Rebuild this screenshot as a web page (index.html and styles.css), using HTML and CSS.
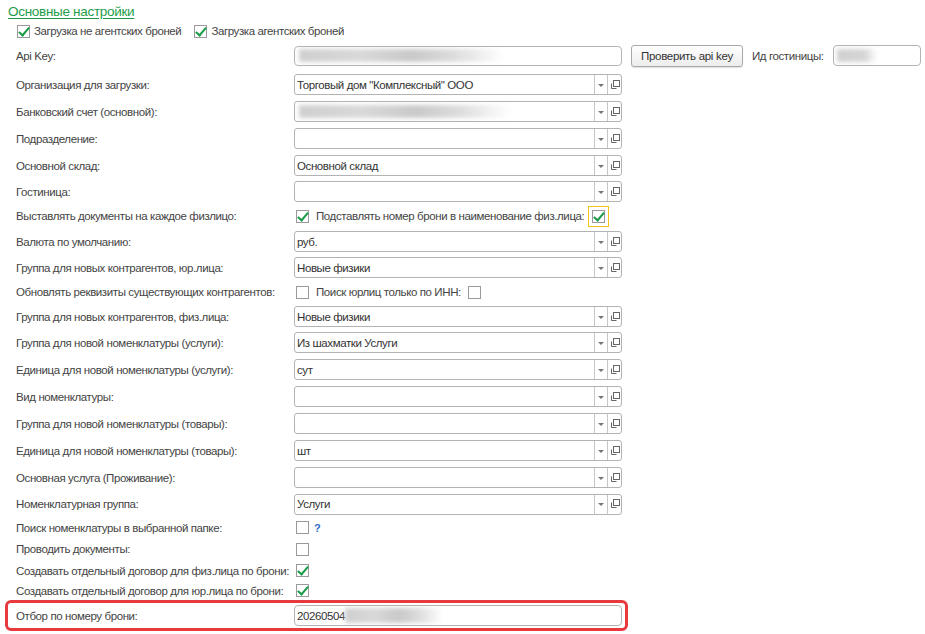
FILE: index.html
```html
<!DOCTYPE html>
<html lang="ru">
<head>
<meta charset="utf-8">
<title>Основные настройки</title>
<link rel="stylesheet" href="styles.css">
</head>
<body>
<div class="form">
  <div class="title-row"><a class="title" href="#">Основные настройки</a></div>

  <div class="row h18 top-checks">
    <span class="cb on"></span><span class="cb-text">Загрузка не агентских броней</span>
    <span class="cb on second"></span><span class="cb-text">Загрузка агентских броней</span>
  </div>

  <div class="row h31">
    <span class="lbl">Api Key:</span>
    <div class="input api"><span class="blur b-api"></span></div>
    <button class="btn">Проверить api key</button>
    <span class="lbl-inline">Ид гостиницы:</span>
    <div class="input hotel"><span class="blur b-hotel"></span></div>
  </div>

  <div class="row h27">
    <span class="lbl">Организация для загрузки:</span>
    <div class="field"><span class="val">Торговый дом "Комплексный" ООО</span><span class="dd"></span><span class="op"><svg width="10" height="10" viewBox="0 0 10 10"><rect x="3.5" y="0.5" width="6" height="6" fill="none" stroke="#666"/><path d="M1.5 3.5 V8.5 H6.5" fill="none" stroke="#666"/></svg></span></div>
  </div>

  <div class="row h27">
    <span class="lbl">Банковский счет (основной):</span>
    <div class="field"><span class="val"><span class="blur b-bank"></span></span><span class="dd"></span><span class="op"><svg width="10" height="10" viewBox="0 0 10 10"><rect x="3.5" y="0.5" width="6" height="6" fill="none" stroke="#666"/><path d="M1.5 3.5 V8.5 H6.5" fill="none" stroke="#666"/></svg></span></div>
  </div>

  <div class="row h27">
    <span class="lbl">Подразделение:</span>
    <div class="field"><span class="val"></span><span class="dd"></span><span class="op"><svg width="10" height="10" viewBox="0 0 10 10"><rect x="3.5" y="0.5" width="6" height="6" fill="none" stroke="#666"/><path d="M1.5 3.5 V8.5 H6.5" fill="none" stroke="#666"/></svg></span></div>
  </div>

  <div class="row h27">
    <span class="lbl">Основной склад:</span>
    <div class="field"><span class="val">Основной склад</span><span class="dd"></span><span class="op"><svg width="10" height="10" viewBox="0 0 10 10"><rect x="3.5" y="0.5" width="6" height="6" fill="none" stroke="#666"/><path d="M1.5 3.5 V8.5 H6.5" fill="none" stroke="#666"/></svg></span></div>
  </div>

  <div class="row h25">
    <span class="lbl">Гостиница:</span>
    <div class="field"><span class="val"></span><span class="dd"></span><span class="op"><svg width="10" height="10" viewBox="0 0 10 10"><rect x="3.5" y="0.5" width="6" height="6" fill="none" stroke="#666"/><path d="M1.5 3.5 V8.5 H6.5" fill="none" stroke="#666"/></svg></span></div>
  </div>

  <div class="row h24">
    <span class="lbl">Выставлять документы на каждое физлицо:</span>
    <span class="cb on fcb"></span><span class="cb-text">Подставлять номер брони в наименование физ.лица:</span>
    <span class="focus"><span class="cb on"></span></span>
  </div>

  <div class="row h27">
    <span class="lbl">Валюта по умолчанию:</span>
    <div class="field"><span class="val">руб.</span><span class="dd"></span><span class="op"><svg width="10" height="10" viewBox="0 0 10 10"><rect x="3.5" y="0.5" width="6" height="6" fill="none" stroke="#666"/><path d="M1.5 3.5 V8.5 H6.5" fill="none" stroke="#666"/></svg></span></div>
  </div>

  <div class="row h25">
    <span class="lbl">Группа для новых контрагентов, юр.лица:</span>
    <div class="field"><span class="val">Новые физики</span><span class="dd"></span><span class="op"><svg width="10" height="10" viewBox="0 0 10 10"><rect x="3.5" y="0.5" width="6" height="6" fill="none" stroke="#666"/><path d="M1.5 3.5 V8.5 H6.5" fill="none" stroke="#666"/></svg></span></div>
  </div>

  <div class="row h24">
    <span class="lbl">Обновлять реквизиты существующих контрагентов:</span>
    <span class="cb fcb"></span><span class="cb-text">Поиск юрлиц только по ИНН:</span>
    <span class="cb after"></span>
  </div>

  <div class="row h25">
    <span class="lbl">Группа для новых контрагентов, физ.лица:</span>
    <div class="field"><span class="val">Новые физики</span><span class="dd"></span><span class="op"><svg width="10" height="10" viewBox="0 0 10 10"><rect x="3.5" y="0.5" width="6" height="6" fill="none" stroke="#666"/><path d="M1.5 3.5 V8.5 H6.5" fill="none" stroke="#666"/></svg></span></div>
  </div>

  <div class="row h27">
    <span class="lbl">Группа для новой номенклатуры (услуги):</span>
    <div class="field"><span class="val">Из шахматки Услуги</span><span class="dd"></span><span class="op"><svg width="10" height="10" viewBox="0 0 10 10"><rect x="3.5" y="0.5" width="6" height="6" fill="none" stroke="#666"/><path d="M1.5 3.5 V8.5 H6.5" fill="none" stroke="#666"/></svg></span></div>
  </div>

  <div class="row h27">
    <span class="lbl">Единица для новой номенклатуры (услуги):</span>
    <div class="field"><span class="val">сут</span><span class="dd"></span><span class="op"><svg width="10" height="10" viewBox="0 0 10 10"><rect x="3.5" y="0.5" width="6" height="6" fill="none" stroke="#666"/><path d="M1.5 3.5 V8.5 H6.5" fill="none" stroke="#666"/></svg></span></div>
  </div>

  <div class="row h27">
    <span class="lbl">Вид номенклатуры:</span>
    <div class="field"><span class="val"></span><span class="dd"></span><span class="op"><svg width="10" height="10" viewBox="0 0 10 10"><rect x="3.5" y="0.5" width="6" height="6" fill="none" stroke="#666"/><path d="M1.5 3.5 V8.5 H6.5" fill="none" stroke="#666"/></svg></span></div>
  </div>

  <div class="row h27">
    <span class="lbl">Группа для новой номенклатуры (товары):</span>
    <div class="field"><span class="val"></span><span class="dd"></span><span class="op"><svg width="10" height="10" viewBox="0 0 10 10"><rect x="3.5" y="0.5" width="6" height="6" fill="none" stroke="#666"/><path d="M1.5 3.5 V8.5 H6.5" fill="none" stroke="#666"/></svg></span></div>
  </div>

  <div class="row h27">
    <span class="lbl">Единица для новой номенклатуры (товары):</span>
    <div class="field"><span class="val">шт</span><span class="dd"></span><span class="op"><svg width="10" height="10" viewBox="0 0 10 10"><rect x="3.5" y="0.5" width="6" height="6" fill="none" stroke="#666"/><path d="M1.5 3.5 V8.5 H6.5" fill="none" stroke="#666"/></svg></span></div>
  </div>

  <div class="row h27">
    <span class="lbl">Основная услуга (Проживание):</span>
    <div class="field"><span class="val"></span><span class="dd"></span><span class="op"><svg width="10" height="10" viewBox="0 0 10 10"><rect x="3.5" y="0.5" width="6" height="6" fill="none" stroke="#666"/><path d="M1.5 3.5 V8.5 H6.5" fill="none" stroke="#666"/></svg></span></div>
  </div>

  <div class="row h26">
    <span class="lbl">Номенклатурная группа:</span>
    <div class="field"><span class="val">Услуги</span><span class="dd"></span><span class="op"><svg width="10" height="10" viewBox="0 0 10 10"><rect x="3.5" y="0.5" width="6" height="6" fill="none" stroke="#666"/><path d="M1.5 3.5 V8.5 H6.5" fill="none" stroke="#666"/></svg></span></div>
  </div>

  <div class="row h21">
    <span class="lbl">Поиск номенклатуры в выбранной папке:</span>
    <span class="cb fcb"></span><span class="help">?</span>
  </div>

  <div class="row h22">
    <span class="lbl">Проводить документы:</span>
    <span class="cb fcb"></span>
  </div>

  <div class="row h21">
    <span class="lbl">Создавать отдельный договор для физ.лица по брони:</span>
    <span class="cb on fcb"></span>
  </div>

  <div class="row h19">
    <span class="lbl">Создавать отдельный договор для юр.лица по брони:</span>
    <span class="cb on fcb"></span>
  </div>

  <div class="row highlight">
    <span class="lbl">Отбор по номеру брони:</span>
    <div class="input booking"><span class="num">20260504</span><span class="blur b-book"></span></div>
  </div>
</div>
</body>
</html>
```

FILE: styles.css
```css
* { box-sizing: border-box; }
html, body { margin: 0; padding: 0; background: #fff; }
body {
  font-family: "Liberation Sans", Arial, sans-serif;
  font-size: 11.5px;
  letter-spacing: -0.4px;
  color: #444;
  width: 925px;
  height: 634px;
  overflow: hidden;
}
.form { display: flex; flex-direction: column; }
.title-row { height: 22px; padding-left: 8px; display: flex; align-items: center; padding-top: 1px; }
.title {
  font-size: 13.5px;
  letter-spacing: -0.3px;
  color: #1e9e4a;
  text-decoration: underline;
  text-underline-offset: 2px;
}
.row { display: flex; align-items: center; padding-left: 16px; }
.h18 { height: 18px; }
.h19 { height: 19px; }
.h21 { height: 21px; }
.h22 { height: 22px; }
.h24 { height: 24px; }
.h25 { height: 25px; }
.h26 { height: 26px; }
.h27 { height: 27px; }
.h31 { height: 31px; }

.lbl { width: 278px; flex: none; white-space: nowrap; }

.cb {
  width: 13px; height: 13px; flex: none;
  border: 1px solid #9a9a9a;
  background: #fff;
  position: relative;
}
.cb.on::after {
  content: "";
  position: absolute;
  left: 3px; top: -1px;
  width: 4px; height: 9px;
  border-right: 2px solid #1a9c48;
  border-bottom: 2px solid #1a9c48;
  transform: rotate(40deg);
}
.top-checks { padding-left: 17px; }
.top-checks .cb-text { margin-left: 4px; }
.top-checks .second { margin-left: 13px; }
.cb-text { margin-left: 7px; white-space: nowrap; }
.fcb { margin-left: 2px; }
.after { margin-left: 7px; }
.focus {
  width: 21px; height: 21px; flex: none;
  margin-left: 4px;
  border: 1px solid #f0c419;
  display: flex; align-items: center; justify-content: center;
}
.help { margin-left: 5px; color: #2c6fc4; font-weight: bold; font-size: 11px; }

.field {
  width: 328px; height: 21px; flex: none;
  border: 1px solid #b3b3b3;
  border-radius: 3px;
  display: flex;
  background: #fff;
  color: #333;
}
.val { flex: 1; padding-left: 2px; display: flex; align-items: center; white-space: nowrap; overflow: hidden; position: relative; }
.dd {
  width: 13px; flex: none;
  border-left: 1px solid #c6c6c6;
  display: flex; align-items: center; justify-content: center;
}
.dd::after {
  content: "";
  border-left: 3px solid transparent;
  border-right: 3px solid transparent;
  border-top: 3px solid #777;
  margin-top: 1px;
}
.op {
  width: 14px; flex: none;
  border-left: 1px solid #c6c6c6;
  display: flex; align-items: center; justify-content: center;
}

.input {
  height: 21px; flex: none;
  border: 1px solid #b3b3b3;
  border-radius: 4px;
  display: flex; align-items: center;
  background: #fff;
  color: #333;
  position: relative;
  overflow: hidden;
}
.api { width: 328px; height: 20px; }
.hotel { width: 88px; margin-left: 9px; }
.booking { width: 328px; padding-left: 2px; }

.blur {
  display: block;
  height: 13px;
  background: linear-gradient(90deg, #cfcfcf 0%, #d9d9d9 30%, #c9c9c9 55%, #dcdcdc 75%, rgba(235,235,235,0) 100%);
  filter: blur(2px);
}
.b-api { width: 205px; margin-left: 4px; }
.b-bank { width: 212px; margin-left: 2px; }
.b-hotel { width: 40px; margin-left: 3px; background: linear-gradient(90deg, #cfcfcf 0%, #d6d6d6 70%, rgba(240,240,240,0) 100%); }
.b-book { width: 98px; margin-left: 0; height: 15px; }
.num { white-space: nowrap; }

.btn {
  margin-left: 9px;
  height: 22px;
  width: 112px;
  font-family: inherit;
  font-size: 11.5px;
  letter-spacing: -0.3px;
  color: #333;
  border: 1px solid #a9a9a9;
  border-radius: 3px;
  background: linear-gradient(#ffffff, #ececec);
  box-shadow: 0 1px 1px rgba(0,0,0,0.12);
  padding: 0;
}
.lbl-inline { margin-left: 9px; white-space: nowrap; }

.highlight {
  margin-left: 5px;
  width: 623px;
  height: 31px;
  border: 3px solid #e8393e;
  border-radius: 6px;
  padding-left: 8px;
}
```
